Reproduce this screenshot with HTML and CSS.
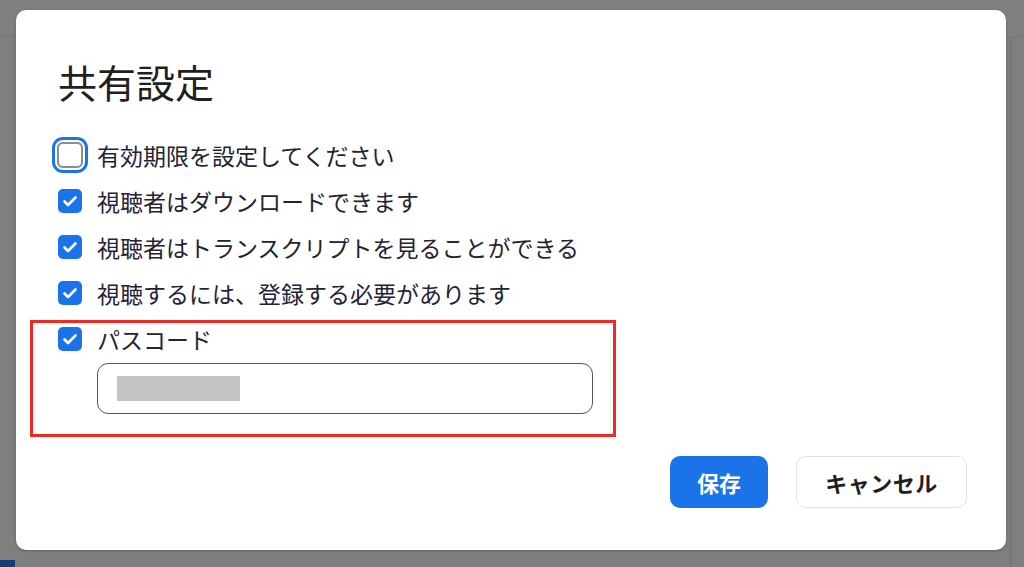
FILE: index.html
```html
<!DOCTYPE html>
<html lang="ja">

<head>
    <meta charset="UTF-8">
    <meta name="viewport" content="width=device-width, initial-scale=1.0">
    <title>共有設定</title>
    <link rel="stylesheet" href="styles.css">
</head>

<body>
    <div class="page">
        <div class="page-header"></div>
        <div class="page-side"></div>
        <div class="page-corner"></div>
    </div>

    <div class="dialog">
        <h2 class="dialog-title">共有設定</h2>

        <ul class="options">
            <li class="option">
                <span class="box box-focus"></span>
                <span>有効期限を設定してください</span>
            </li>
            <li class="option">
                <span class="box box-checked">
                    <svg viewBox="0 0 24 24" width="24" height="24"><path d="M6.5 12.5l3.5 3.5 7.5-7.5" fill="none" stroke="#fff" stroke-width="2.6" stroke-linecap="round" stroke-linejoin="round"/></svg>
                </span>
                <span>視聴者はダウンロードできます</span>
            </li>
            <li class="option">
                <span class="box box-checked">
                    <svg viewBox="0 0 24 24" width="24" height="24"><path d="M6.5 12.5l3.5 3.5 7.5-7.5" fill="none" stroke="#fff" stroke-width="2.6" stroke-linecap="round" stroke-linejoin="round"/></svg>
                </span>
                <span>視聴者はトランスクリプトを見ることができる</span>
            </li>
            <li class="option">
                <span class="box box-checked">
                    <svg viewBox="0 0 24 24" width="24" height="24"><path d="M6.5 12.5l3.5 3.5 7.5-7.5" fill="none" stroke="#fff" stroke-width="2.6" stroke-linecap="round" stroke-linejoin="round"/></svg>
                </span>
                <span>視聴するには、登録する必要があります</span>
            </li>
            <li class="option">
                <span class="box box-checked">
                    <svg viewBox="0 0 24 24" width="24" height="24"><path d="M6.5 12.5l3.5 3.5 7.5-7.5" fill="none" stroke="#fff" stroke-width="2.6" stroke-linecap="round" stroke-linejoin="round"/></svg>
                </span>
                <span>パスコード</span>
            </li>
        </ul>

        <div class="passcode-input">
            <span class="masked"></span>
        </div>

        <div class="actions">
            <button class="btn btn-primary">保存</button>
            <button class="btn btn-default">キャンセル</button>
        </div>

        <div class="highlight"></div>
    </div>
</body>

</html>
```

FILE: styles.css
```css
body {
    margin: 0;
    padding: 0;
    background-color: #7f7f7f;
    font-family: "Noto Sans CJK JP", "Noto Sans", sans-serif;
    color: #232333;
    overflow: hidden;
}

.page {
    position: relative;
    width: 1024px;
    height: 567px;
}

.page-header {
    height: 36px;
    border-bottom: 1px solid #767676;
    background-color: #808080;
}

.page-side {
    position: absolute;
    top: 37px;
    right: 12px;
    width: 3px;
    height: 530px;
    background-color: #787878;
}

.page-corner {
    position: absolute;
    left: 0;
    bottom: 0;
    width: 15px;
    height: 7px;
    background-color: #173b73;
}

/* modal */
.dialog {
    position: absolute;
    top: 10px;
    left: 16px;
    width: 990px;
    height: 540px;
    box-sizing: border-box;
    padding: 47px 39px 0 42px;
    background-color: #fff;
    border-radius: 10px;
    box-shadow: 0 1px 3px rgba(0, 0, 0, 0.25);
}

.dialog-title {
    margin: 0;
    font-size: 39px;
    line-height: 48px;
    font-weight: 400;
    color: #1f1f1f;
}

.options {
    list-style-type: none;
    margin: 27px 0 0 0;
    padding: 0;
}

.option {
    display: flex;
    align-items: center;
    gap: 15px;
    height: 46px;
    font-size: 23px;
}

.box {
    flex: none;
    display: block;
    width: 24px;
    height: 24px;
    box-sizing: border-box;
    border-radius: 5px;
}

.box svg {
    display: block;
}

.box-checked {
    background-color: #1a73e8;
}

.box-focus {
    width: 26px;
    height: 26px;
    margin: 0 -1px;
    border: 2px solid #8c8c93;
    border-radius: 6px;
    box-shadow: 0 0 0 2px #fff, 0 0 0 5px #1a73e8;
}

.passcode-input {
    display: flex;
    align-items: center;
    margin: 1px 0 0 39px;
    width: 496px;
    height: 51px;
    box-sizing: border-box;
    padding-left: 19px;
    border: 1.5px solid #54545e;
    border-radius: 11px;
}

.masked {
    width: 123px;
    height: 25px;
    background-color: #c4c4c4;
}

.actions {
    display: flex;
    justify-content: flex-end;
    gap: 28px;
    margin-top: 42px;
}

.btn {
    height: 52px;
    box-sizing: border-box;
    border-radius: 10px;
    font-family: "Noto Sans CJK JP", "Noto Sans", sans-serif;
    font-size: 22px;
    font-weight: 700;
    cursor: pointer;
}

.btn-primary {
    width: 98px;
    border: none;
    background-color: #1a73e8;
    color: #fff;
}

.btn-default {
    width: 171px;
    border: 1px solid #dfe1e6;
    background-color: #fff;
    color: #1f1f1f;
    letter-spacing: 0.5px;
}

/* annotation box drawn over the passcode area */
.highlight {
    position: absolute;
    left: 14px;
    top: 310px;
    width: 586px;
    height: 117px;
    box-sizing: border-box;
    border: 3.5px solid #ee2a24;
    pointer-events: none;
}
```
